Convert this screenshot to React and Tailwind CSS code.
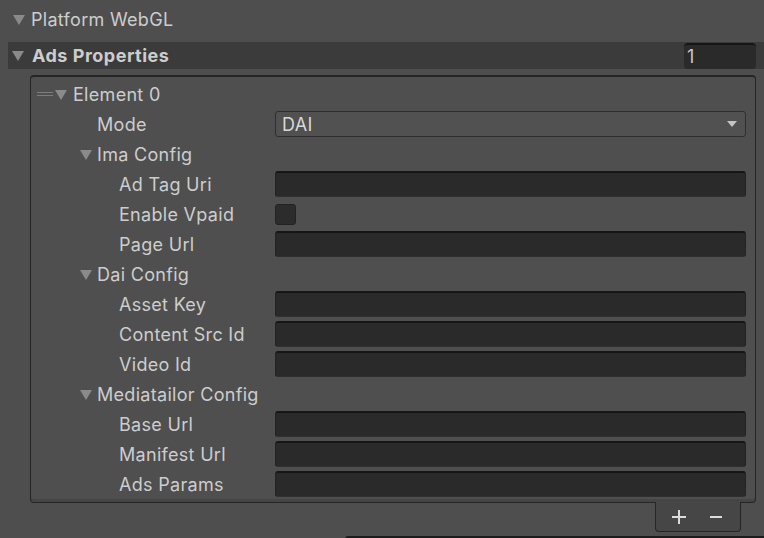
import React from "react";

const Tri = ({ className = "" }) => (
  <svg width="12" height="11" viewBox="0 0 12 11" className={className}>
    <polygon points="0,1 12,1 6,11" fill="#8a8a8a" />
  </svg>
);

const Field = () => (
  <div className="h-[26px] flex-1 rounded-[3px] bg-[#2a2a2a] border-t-2 border-t-[#161616] border-x border-x-[#232323] border-b border-b-[#2f2f2f]" />
);

const LabelRow = ({ indent, label, children }) => (
  <div className="h-[30px] flex items-center pr-[9px]">
    <div className="w-[244px] shrink-0 flex items-center" style={{ paddingLeft: indent }}>
      <span>{label}</span>
    </div>
    {children}
  </div>
);

const FoldRow = ({ label }) => (
  <div className="h-[30px] flex items-center pl-[49px]">
    <Tri className="mr-[5px]" />
    <span>{label}</span>
  </div>
);

export default function App() {
  return (
    <div
      className="w-[764px] h-[538px] bg-[#4e4e4e] text-[#cdcdcd] text-[18px] tracking-[0.3px] overflow-hidden relative"
      style={{ fontFamily: "Inter, 'Noto Sans', sans-serif" }}
    >
      <div className="pt-[4px]">
        <div className="h-[30px] flex items-center pl-[13px]">
          <Tri className="mr-[6px]" />
          <span>Platform WebGL</span>
        </div>
      </div>
      <div className="mt-[8px] ml-[8px] h-[27px] bg-[#3b3b3b] flex items-center pl-[4px]">
        <Tri className="mr-[8px]" />
        <span className="font-bold tracking-[0.5px]">Ads Properties</span>
        <div className="ml-auto mr-[8px] w-[72px] h-[26px] rounded-[4px] bg-[#2a2a2a] border-t-2 border-t-[#151515] flex items-center pl-[3px] text-[#c8c8c8]">
          1
        </div>
      </div>
      <div className="mt-[6px] ml-[30px] w-[726px] h-[428px] border border-[#252525] border-t-2 rounded-[4px] bg-[#4f4f4f] pt-[2px] shadow-[inset_0_-3px_0_#454545]">
        <div className="h-[30px] flex items-center pl-[6px]">
          <div className="w-[16px] flex flex-col gap-[2px] mr-[2px]">
            <div className="h-[1px] bg-[#7c7c7c]" />
            <div className="h-[1px] bg-[#7c7c7c]" />
          </div>
          <Tri className="mr-[6px]" />
          <span>Element 0</span>
        </div>
        <LabelRow indent={66} label="Mode">
          <div className="h-[26px] flex-1 rounded-[3px] bg-[#515151] border border-[#2e2e2e] flex items-center pl-[6px] pr-[8px] text-[#d8d8d8]">
            <span>DAI</span>
            <svg width="10" height="6" viewBox="0 0 10 6" className="ml-auto">
              <polygon points="0,0 10,0 5,6" fill="#c4c4c4" />
            </svg>
          </div>
        </LabelRow>
        <FoldRow label="Ima Config" />
        <LabelRow indent={88} label="Ad Tag Uri"><Field /></LabelRow>
        <LabelRow indent={88} label="Enable Vpaid">
          <div className="w-[21px] h-[21px] rounded-[3px] bg-[#2c2c2c] border border-[#232323]" />
        </LabelRow>
        <LabelRow indent={88} label="Page Url"><Field /></LabelRow>
        <FoldRow label="Dai Config" />
        <LabelRow indent={88} label="Asset Key"><Field /></LabelRow>
        <LabelRow indent={88} label="Content Src Id"><Field /></LabelRow>
        <LabelRow indent={88} label="Video Id"><Field /></LabelRow>
        <FoldRow label="Mediatailor Config" />
        <LabelRow indent={88} label="Base Url"><Field /></LabelRow>
        <LabelRow indent={88} label="Manifest Url"><Field /></LabelRow>
        <LabelRow indent={88} label="Ads Params"><Field /></LabelRow>
      </div>
      <div className="ml-[655px] -mt-[1px] w-[86px] h-[30px] bg-[#464646] border border-t-0 border-[#262626] rounded-b-[4px] flex items-center pl-[16px] gap-[24px] text-[#dcdcdc]">
        <svg width="14" height="14" viewBox="0 0 14 14">
          <rect x="0" y="6" width="14" height="2" fill="#dcdcdc" />
          <rect x="6" y="0" width="2" height="14" fill="#dcdcdc" />
        </svg>
        <svg width="12" height="2" viewBox="0 0 12 2">
          <rect x="0" y="0" width="12" height="2" fill="#dcdcdc" />
        </svg>
      </div>
      <div className="ml-[345px] mt-[4px] h-[4px] bg-[#1c1c1c] rounded-tl-[3px]" />
    </div>
  );
}
